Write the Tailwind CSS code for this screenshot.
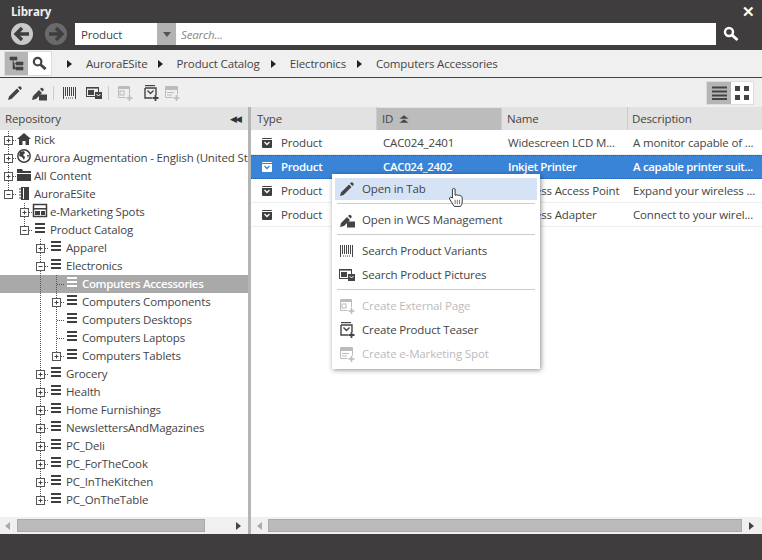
<!DOCTYPE html>
<html lang="en">
<head>
<meta charset="UTF-8" />
<script src="https://cdn.jsdelivr.net/npm/@tailwindcss/browser@4"></script>
<title>Library</title>
</head>
<body class="overflow-hidden">
<svg width="0" height="0" class="absolute">
	<defs>
		<symbol id="i-pencil" viewBox="0 0 16 16"><path d="M1 15l1-3.500 8-8 2.500 2.500-8 8zM11 2.500l1-1q1-.5 1.500 0l1 1q.5.500 0 1.500l-1 1z" fill="currentColor"/></symbol>
		<symbol id="i-wcs" viewBox="0 0 16 16"><path d="M1 15l1-4 6-6 3 3-6 6zM9 4l1-1q1-.5 1.500 0l1 1q.5.500 0 1.500l-1 1z" fill="currentColor"/><rect x="8" y="9.500" width="8" height="6" fill="currentColor"/></symbol>
		<symbol id="i-barcode" viewBox="0 0 13 12"><path d="M.5 0v12M2.500 0v9M4.500 0v9M6.500 0v9M8.500 0v9M10.500 0v9M12.500 0v12" stroke="currentColor"/><path d="M3 11h8" stroke="currentColor" stroke-dasharray="1 1"/></symbol>
		<symbol id="i-pics" viewBox="0 0 16 14"><path d="M0 1h13v2H0z" fill="currentColor" opacity=".6"/><rect x=".5" y="1.500" width="12" height="9" fill="none" stroke="currentColor"/><rect x="2" y="4" width="6" height="5" fill="currentColor"/><rect x="9" y="6" width="7" height="7" fill="currentColor"/><path d="M10.500 8l2 2 2-2" fill="none" stroke="#fff"/></symbol>
		<symbol id="i-page" viewBox="0 0 16 16"><path d="M1.500 1.500h11v8M1.500 1.500v11h7" fill="none" stroke="currentColor"/><path d="M1 2h12v2H1z" fill="currentColor"/><rect x="3" y="6" width="4" height="4" fill="none" stroke="currentColor"/><path d="M12.500 10v6M9.500 13h6" stroke="currentColor" stroke-width="1.600"/></symbol>
		<symbol id="i-teaser" viewBox="0 0 16 16"><path d="M2 .5h10" stroke="currentColor" stroke-width="1.400"/><path d="M2 3h11v7M2 3v10h7" fill="none" stroke="currentColor" stroke-width="1.400"/><path d="M4.500 5.500l3 3 3-3" fill="none" stroke="currentColor" stroke-width="1.400"/><path d="M12.500 10v6M9.500 13h6" stroke="currentColor" stroke-width="1.800"/></symbol>
		<symbol id="i-espot" viewBox="0 0 16 16"><path d="M1.500 1.500h12v8M1.500 1.500v11h7" fill="none" stroke="currentColor"/><path d="M1 2h13v3H1zM3 7h7v1H3zM3 9.500h5v1H3z" fill="currentColor"/><path d="M12.500 10v6M9.500 13h6" stroke="currentColor" stroke-width="1.600"/></symbol>
		<symbol id="i-lens" viewBox="0 0 16 16"><circle cx="6" cy="6" r="4" fill="none" stroke="currentColor" stroke-width="2.400"/><path d="M9 9l5.500 5" stroke="currentColor" stroke-width="3"/></symbol>
		<symbol id="i-product" viewBox="0 0 10 10"><rect width="10" height="10" rx="1" fill="#3f3d3e"/><rect y="1" width="10" height="1" fill="#fff"/><path d="M2.500 4l2.500 2.500L7.500 4" fill="none" stroke="#fff" stroke-width="1.300"/></symbol>
		<symbol id="i-product-sel" viewBox="0 0 10 10"><rect width="10" height="10" rx="1" fill="#fff"/><rect y="1" width="10" height="1" fill="#3a84d8"/><path d="M2.500 4l2.500 2.500L7.500 4" fill="none" stroke="#3a84d8" stroke-width="1.300"/></symbol>
		<symbol id="t-plus" viewBox="0 0 16 18"><path d="M8.500 0v5M8.500 14v4M13 9.500h3" stroke="#555" stroke-dasharray="1 1"/><rect x="4.500" y="5.500" width="8" height="8" fill="#fff" stroke="#555"/><path d="M6.500 9.500h4M8.500 7.500v4" stroke="#444"/></symbol>
		<symbol id="t-plus-end" viewBox="0 0 16 18"><path d="M8.500 0v5M13 9.500h3" stroke="#555" stroke-dasharray="1 1"/><rect x="4.500" y="5.500" width="8" height="8" fill="#fff" stroke="#555"/><path d="M6.500 9.500h4M8.500 7.500v4" stroke="#444"/></symbol>
		<symbol id="t-minus" viewBox="0 0 16 18"><path d="M8.500 0v5M8.500 14v4M13 9.500h3" stroke="#555" stroke-dasharray="1 1"/><rect x="4.500" y="5.500" width="8" height="8" fill="#fff" stroke="#555"/><path d="M6.500 9.500h4" stroke="#444"/></symbol>
		<symbol id="t-minus-end" viewBox="0 0 16 18"><path d="M8.500 0v5M13 9.500h3" stroke="#555" stroke-dasharray="1 1"/><rect x="4.500" y="5.500" width="8" height="8" fill="#fff" stroke="#555"/><path d="M6.500 9.500h4" stroke="#444"/></symbol>
		<symbol id="t-leaf" viewBox="0 0 16 18"><path d="M8.500 0v18M9 9.500h7" stroke="#555" stroke-dasharray="1 1"/></symbol>
		<symbol id="t-line" viewBox="0 0 16 18"><path d="M8.500 0v18" stroke="#555" stroke-dasharray="1 1"/></symbol>
		<symbol id="n-cat" viewBox="0 0 16 18"><path d="M3 3h10M3 7h10M3 11h10" stroke="currentColor" stroke-width="2"/></symbol>
		<symbol id="n-home" viewBox="0 0 16 18"><path d="M1 8l7-6 7 6h-2v6H9.500V10h-3v4H3V8z" fill="currentColor"/></symbol>
		<symbol id="n-globe" viewBox="0 0 16 18"><circle cx="8" cy="7" r="6.200" fill="none" stroke="currentColor" stroke-width="1.500"/><path d="M4 3l4-1 1 2-2 2 2 2-1 3-2-3-3-1zM11 6l2 0-1 3z" fill="currentColor"/></symbol>
		<symbol id="n-folder" viewBox="0 0 16 18"><path d="M1 2h5l1 2h8v2H1zM1 7h14v7H1z" fill="currentColor"/></symbol>
		<symbol id="n-site" viewBox="0 0 16 18"><rect x="5" y="2" width="8" height="13" fill="currentColor"/><path d="M3 4h3M3 7h3M3 10h3M3 13h3" stroke="currentColor"/><path d="M7.500 3v11" stroke="#fff"/></symbol>
		<symbol id="n-espot" viewBox="0 0 16 18"><rect x="1.500" y="1.500" width="13" height="12" fill="none" stroke="currentColor" stroke-width="1.500"/><rect x="1" y="5" width="14" height="1.500" fill="currentColor"/><rect x="3" y="8" width="5" height="4" fill="currentColor"/><rect x="9" y="8" width="4" height="4" fill="currentColor"/></symbol>
	</defs>
</svg>

<div class="flex h-[560px] w-[762px] flex-col bg-[#3f3d3e] text-[11.5px] tracking-[-0.15px] text-[#444] [font-family:'Open_Sans',sans-serif]">
	<!-- title + search -->
	<div class="h-[50px] shrink-0 px-[10px] pt-[3px]">
		<div class="flex h-[17px] items-center justify-between pl-px -mr-[3px]">
			<span class="font-bold text-[#f0f0f0]">Library</span>
			<span class="text-[15px] font-bold leading-none text-white">✕</span>
		</div>
		<div class="mt-[3px] flex h-[22px] items-center">
			<svg width="24" height="24" viewBox="0 0 24 24" class="mr-[10px] shrink-0"><circle cx="12" cy="12" r="11" fill="#c9c9c9"/><path d="M12 6l-6 6 6 6M6.500 12H19" fill="none" stroke="#3f3d3e" stroke-width="3.400"/></svg>
			<svg width="24" height="24" viewBox="0 0 24 24" class="mr-[7px] shrink-0"><circle cx="12" cy="12" r="11" fill="#6a6a6a"/><path d="M12 6l6 6-6 6M17.500 12H5" fill="none" stroke="#3f3d3e" stroke-width="3.400"/></svg>
			<div class="flex h-[22px] w-[641px] bg-white">
				<div class="w-[82px] pl-[6px] leading-[23px]">Product</div>
				<div class="flex w-[19px] items-center justify-center bg-[#b3b3b3]"><span class="border-x-[4px] border-t-[5px] border-x-transparent border-t-[#555]"></span></div>
				<div class="pl-[5px] italic leading-[23px] text-[#888]">Search...</div>
			</div>
			<svg width="16" height="16" class="ml-[7px] text-white"><use href="#i-lens"/></svg>
		</div>
	</div>

	<!-- breadcrumb -->
	<div class="flex h-[28px] shrink-0 items-center border-b border-[#444] bg-[#f0f0f0] pl-[4px]">
		<div class="flex h-[25px] w-[48px] border border-[#ddd] bg-white">
			<div class="flex w-[23px] items-center justify-center bg-[#b5b5b5]">
				<svg width="15" height="15" viewBox="0 0 15 15"><path d="M1 1h7v3H1zM7 6h7v3H7zM7 11h7v3H7zM4 4v9h3M4 7.500h3" fill="#444" stroke="#444" stroke-width=".6"/></svg>
			</div>
			<div class="flex flex-1 items-center justify-center"><svg width="15" height="15" class="text-[#444]"><use href="#i-lens"/></svg></div>
		</div>
		<span class="ml-[15px] mr-[14px] border-y-[4px] border-l-[5px] border-y-transparent border-l-[#222]"></span>
		<span class="pt-px">AuroraESite</span>
		<span class="ml-[10px] mr-[14px] border-y-[4px] border-l-[5px] border-y-transparent border-l-[#222]"></span>
		<span class="pt-px">Product Catalog</span>
		<span class="ml-[11px] mr-[14px] border-y-[4px] border-l-[5px] border-y-transparent border-l-[#222]"></span>
		<span class="pt-px">Electronics</span>
		<span class="ml-[11px] mr-[14px] border-y-[4px] border-l-[5px] border-y-transparent border-l-[#222]"></span>
		<span class="pt-px">Computers Accessories</span>
	</div>

	<!-- actions -->
	<div class="flex h-[29px] shrink-0 items-center bg-[#efefef] pl-[7px] pr-[8px]">
		<svg width="16" height="16" class="text-[#444]"><use href="#i-pencil"/></svg>
		<svg width="16" height="16" class="ml-[8px] text-[#444]"><use href="#i-wcs"/></svg>
		<span class="ml-[6px] mr-[9px] h-[14px] w-px bg-[#ccc]"></span>
		<svg width="13" height="12" class="text-[#444]"><use href="#i-barcode"/></svg>
		<svg width="16" height="14" class="ml-[10px] text-[#444]"><use href="#i-pics"/></svg>
		<span class="ml-[6px] mr-[8px] h-[14px] w-px bg-[#ccc]"></span>
		<svg width="16" height="16" class="text-[#bbb]"><use href="#i-page"/></svg>
		<svg width="16" height="16" class="ml-[10px] text-[#444]"><use href="#i-teaser"/></svg>
		<svg width="16" height="16" class="ml-[5px] text-[#bbb]"><use href="#i-espot"/></svg>
		<div class="ml-auto flex h-[24px] w-[48px] border border-[#ddd] bg-white">
			<div class="flex w-[24px] items-center justify-center bg-[#b5b5b5]">
				<svg width="15" height="14" viewBox="0 0 15 14"><path d="M0 1.500h15M0 5.500h15M0 9.500h15M0 13h15" stroke="#444" stroke-width="2"/></svg>
			</div>
			<div class="flex flex-1 items-center justify-center">
				<svg width="14" height="14" viewBox="0 0 14 14"><path d="M0 0h5v5H0zM9 0h5v5H9zM0 9h5v5H0zM9 9h5v5H9z" fill="#444"/></svg>
			</div>
		</div>
	</div>

	<!-- panes -->
	<div class="relative flex h-[427px] shrink-0 bg-white">
		<div class="flex w-[248px] shrink-0 flex-col">
			<div class="flex h-[23px] shrink-0 items-center justify-between bg-[#e2e2e2] pl-[5px] pr-[5px]">
				<span>Repository</span>
				<span class="text-[9px] tracking-[-2px] pr-[3px] text-[#333]">◀◀</span>
			</div>
			<div id="tree" class="flex-1 overflow-hidden whitespace-nowrap pt-px"></div>
			<div class="flex h-[17px] shrink-0 items-center bg-[#f0f0f0]">
				<span class="ml-[5px] border-y-[4px] border-r-[5px] border-y-transparent border-r-[#aaa]"></span>
				<div class="ml-[7px] h-[13px] w-[188px] border border-[#aaa] bg-[#bababa]"></div>
				<span class="ml-auto mr-[7px] border-y-[4px] border-l-[5px] border-y-transparent border-l-[#444]"></span>
			</div>
		</div>
		<div class="w-[3px] shrink-0 bg-[#b5b5b5]"></div>
		<div class="flex min-w-0 flex-1 flex-col">
			<div class="flex h-[23px] shrink-0 items-center bg-[#e2e2e2]">
				<div class="w-[126px] border-r border-[#ccc] pl-[6px] leading-[23px]">Type</div>
				<div class="flex h-[22px] w-[125px] items-center gap-[6px] border-r border-[#ccc] bg-[#bcbcbc] pl-[5px]">ID
					<svg width="10" height="8" viewBox="0 0 10 8"><path d="M5 0l5 4H0zM5 4l5 4H0z" fill="#444" stroke="#bcbcbc" stroke-width=".5"/></svg>
				</div>
				<div class="w-[126px] border-r border-[#ccc] pl-[5px] leading-[23px]">Name</div>
				<div class="pl-[4px]">Description</div>
			</div>
			<div class="flex-1 overflow-hidden pt-px">
				<div class="flex h-[24px] items-center border-b border-[#eee] whitespace-nowrap">
					<svg width="10" height="10" class="ml-[11px] mr-[9px] shrink-0"><use href="#i-product"/></svg>
					<span class="w-[102px] shrink-0 pt-px">Product</span><span class="w-[125px] shrink-0 pt-px">CAC024_2401</span><span class="w-[125px] shrink-0 pt-px">Widescreen LCD M...</span><span class="shrink-0 pt-px">A monitor capable of ...</span>
				</div>
				<div class="flex h-[24px] items-center border-y border-dotted border-[#1d5fb0] bg-[#3a84d8] whitespace-nowrap font-semibold tracking-[-0.35px] text-white">
					<svg width="10" height="10" class="ml-[11px] mr-[9px] shrink-0"><use href="#i-product-sel"/></svg>
					<span class="w-[102px] shrink-0">Product</span><span class="w-[125px] shrink-0">CAC024_2402</span><span class="w-[125px] shrink-0">Inkjet Printer</span><span class="shrink-0">A capable printer suit...</span>
				</div>
				<div class="flex h-[24px] items-center border-b border-[#eee] whitespace-nowrap">
					<svg width="10" height="10" class="ml-[11px] mr-[9px] shrink-0"><use href="#i-product"/></svg>
					<span class="w-[102px] shrink-0 pt-px">Product</span><span class="w-[125px] shrink-0 pt-px">CAC024_2403</span><span class="w-[125px] shrink-0 pt-px">Wireless Access Point</span><span class="shrink-0 pt-px">Expand your wireless ...</span>
				</div>
				<div class="flex h-[24px] items-center border-b border-[#eee] whitespace-nowrap">
					<svg width="10" height="10" class="ml-[11px] mr-[9px] shrink-0"><use href="#i-product"/></svg>
					<span class="w-[102px] shrink-0 pt-px">Product</span><span class="w-[125px] shrink-0 pt-px">CAC024_2404</span><span class="w-[125px] shrink-0 pt-px">Wireless Adapter</span><span class="shrink-0 pt-px">Connect to your wirel...</span>
				</div>
			</div>
			<div class="flex h-[17px] shrink-0 items-center bg-[#f0f0f0]">
				<span class="ml-[6px] border-y-[4px] border-r-[5px] border-y-transparent border-r-[#aaa]"></span>
				<div class="ml-[6px] h-[13px] w-[474px] border border-[#aaa] bg-[#bababa]"></div>
				<span class="ml-auto mr-[8px] border-y-[4px] border-l-[5px] border-y-transparent border-l-[#444]"></span>
			</div>
		</div>

		<!-- context menu -->
		<div class="absolute left-[332px] top-[67px] w-[208px] bg-white px-[3px] py-[4px] shadow-[1px_1px_5px_rgba(0,0,0,0.45)]">
			<div class="flex h-[22px] items-center bg-[#d5e3f5]"><svg width="16" height="16" class="ml-[4px] mr-[7px] text-[#444]"><use href="#i-pencil"/></svg>Open in Tab</div>
			<div class="mx-[2px] my-[3px] h-px bg-[#ccc]"></div>
			<div class="flex h-[24px] items-center pt-px"><svg width="16" height="16" class="ml-[4px] mr-[7px] text-[#444]"><use href="#i-wcs"/></svg>Open in WCS Management</div>
			<div class="mx-[2px] my-[3px] h-px bg-[#ccc]"></div>
			<div class="flex h-[24px] items-center pt-px"><svg width="13" height="12" class="ml-[5px] mr-[9px] text-[#444]"><use href="#i-barcode"/></svg>Search Product Variants</div>
			<div class="flex h-[24px] items-center pt-px"><svg width="16" height="14" class="ml-[4px] mr-[7px] text-[#444]"><use href="#i-pics"/></svg>Search Product Pictures</div>
			<div class="mx-[2px] my-[3px] h-px bg-[#ccc]"></div>
			<div class="flex h-[24px] items-center pt-px text-[#bbb]"><svg width="16" height="16" class="ml-[4px] mr-[7px]"><use href="#i-page"/></svg>Create External Page</div>
			<div class="flex h-[24px] items-center pt-px"><svg width="16" height="16" class="ml-[4px] mr-[7px] text-[#444]"><use href="#i-teaser"/></svg>Create Product Teaser</div>
			<div class="flex h-[24px] items-center pt-px text-[#bbb]"><svg width="16" height="16" class="ml-[4px] mr-[7px]"><use href="#i-espot"/></svg>Create e-Marketing Spot</div>
		</div>
		<svg class="absolute left-[448px] top-[79px]" width="16" height="24" viewBox="0 0 18 24"><path d="M5 2q1.500-1.500 3 0v7l1-.5q1.500-.5 2 .5l.5 0q1.500-.5 2 .5 1.500-.5 2 1 .5 1 .5 3v3q0 3-2 5H7l-5-8q-1-2 1-2.500l2 1z" fill="#fff" stroke="#222"/><path d="M8 14v5M10.500 14v5M13 14v5" stroke="#222" stroke-width=".7"/></svg>
	</div>
</div>

<script>
	// depth, expander, icon, label, guides still open on the left
	const rows = [
		[0, 'plus', 'home', 'Rick', []],
		[0, 'plus', 'globe', 'Aurora Augmentation - English (United States)', []],
		[0, 'plus', 'folder', 'All Content', []],
		[0, 'minus-end', 'site', 'AuroraESite', []],
		[1, 'plus', 'espot', 'e-Marketing Spots', [0]],
		[1, 'minus-end', 'cat', 'Product Catalog', [0]],
		[2, 'plus', 'cat', 'Apparel', [0, 0]],
		[2, 'minus', 'cat', 'Electronics', [0, 0]],
		[3, 'leaf', 'cat', 'Computers Accessories', [0, 0, 1]],
		[3, 'plus', 'cat', 'Computers Components', [0, 0, 1]],
		[3, 'leaf', 'cat', 'Computers Desktops', [0, 0, 1]],
		[3, 'leaf', 'cat', 'Computers Laptops', [0, 0, 1]],
		[3, 'plus-end', 'cat', 'Computers Tablets', [0, 0, 1]],
		[2, 'plus', 'cat', 'Grocery', [0, 0]],
		[2, 'plus', 'cat', 'Health', [0, 0]],
		[2, 'plus', 'cat', 'Home Furnishings', [0, 0]],
		[2, 'plus', 'cat', 'NewslettersAndMagazines', [0, 0]],
		[2, 'plus', 'cat', 'PC_Deli', [0, 0]],
		[2, 'plus', 'cat', 'PC_ForTheCook', [0, 0]],
		[2, 'plus', 'cat', 'PC_InTheKitchen', [0, 0]],
		[2, 'plus-end', 'cat', 'PC_OnTheTable', [0, 0]],
	];
	const cell = (id) => `<svg width="16" height="18" class="shrink-0"><use href="#${id}"/></svg>`;
	document.getElementById('tree').innerHTML = rows.map(([depth, exp, icon, label, guides]) => {
		const selected = label === 'Computers Accessories';
		const left = guides.map((on) => (on ? cell('t-line') : '<span class="w-4 shrink-0"></span>')).join('');
		const rowClass = selected ? 'bg-[#a9a9a9] font-semibold tracking-[-0.35px] text-white' : 'text-[#444]';
		const iconColor = selected ? 'text-white' : 'text-[#3f3d3e]';
		return `<div class="flex h-[18px] items-center ${rowClass}">${left}${cell('t-' + exp)}<svg width="16" height="18" class="shrink-0 ${iconColor}"><use href="#n-${icon}"/></svg><span class="ml-[2px]">${label}</span></div>`;
	}).join('');
</script>
</body>
</html>
